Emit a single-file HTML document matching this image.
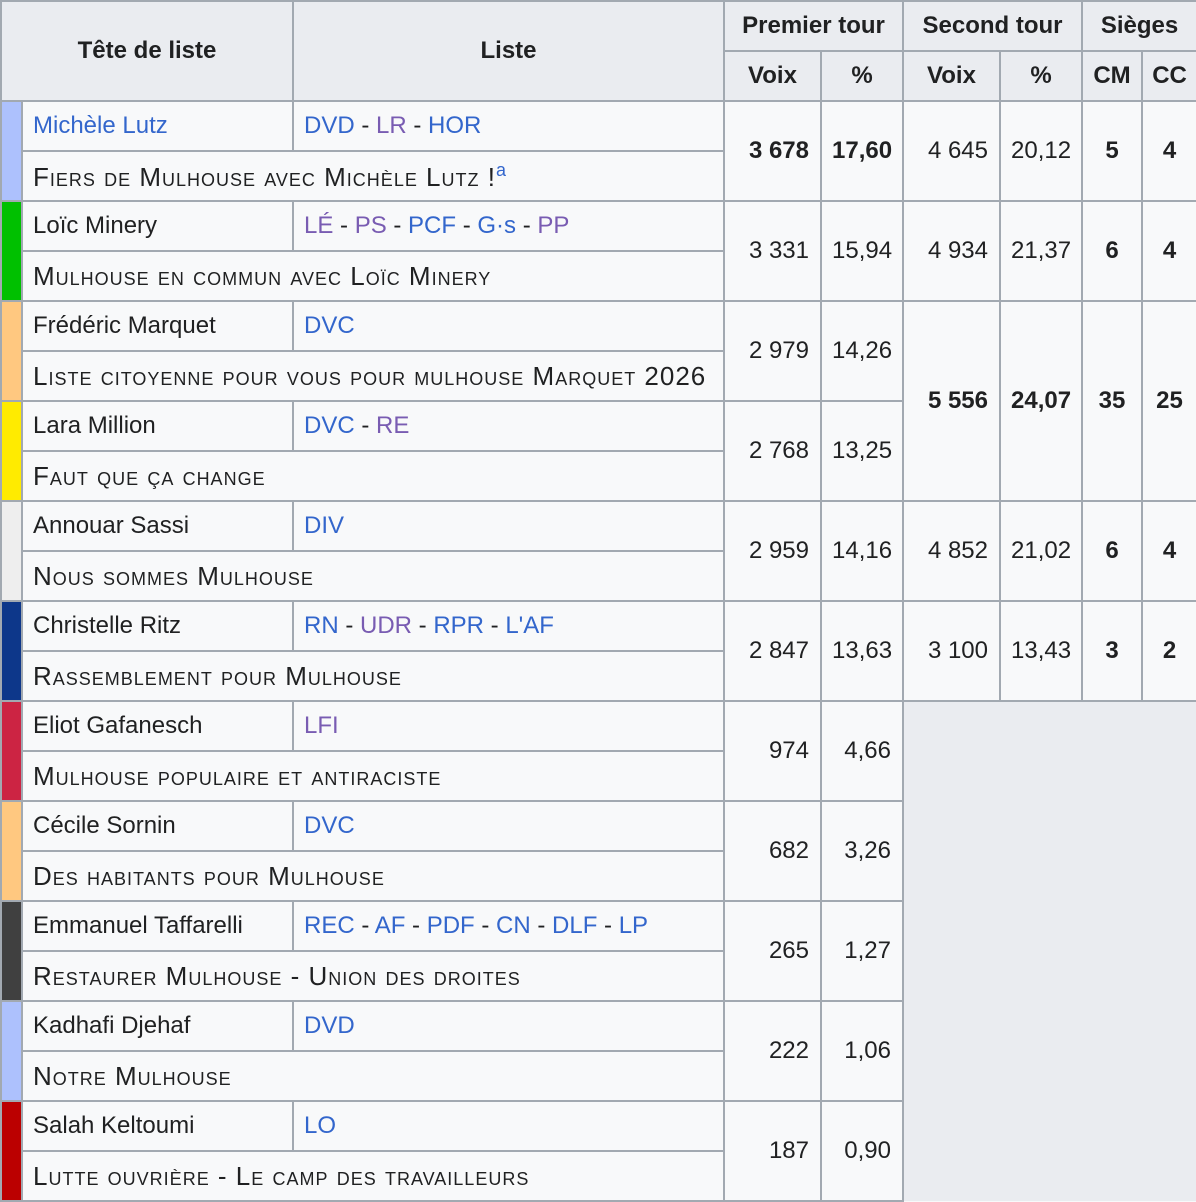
<!DOCTYPE html>
<html><head><meta charset="utf-8">
<style>
html,body{margin:0;padding:0;background:#fff;}
table{border-collapse:collapse;table-layout:fixed;width:1196px;font-family:"Liberation Sans",Arial,sans-serif;font-size:24px;color:#202122;background:#f8f9fa;}
td,th{border:2px solid #a2a9b1;height:46px;padding:0 10px;white-space:nowrap;overflow:hidden;}
th{background:#eaecf0;font-weight:bold;text-align:center;}
tr{height:50px;}
.c{padding:0;border-top:2px solid #a2a9b1;}
.n{text-align:right;padding-right:11px;}
.s{text-align:center;padding:0;}
.b{font-weight:bold;}
.sc{font-variant:small-caps;font-size:26px;letter-spacing:1px;}
a{color:#3366cc;text-decoration:none;}
.v{color:#795cb2;}
.g{background:#eaecf0;border:none;border-left:2px solid #a2a9b1;}
sup{font-size:18px;vertical-align:10px;color:#3366cc;font-variant:normal;letter-spacing:0;}
</style></head><body>
<table>
<colgroup><col style="width:21px"><col style="width:271px"><col style="width:431px"><col style="width:97px"><col style="width:82px"><col style="width:97px"><col style="width:82px"><col style="width:60px"><col style="width:55px"></colgroup>
<tr><th colspan="2" rowspan="2">Tête de liste</th><th rowspan="2">Liste</th><th colspan="2">Premier tour</th><th colspan="2">Second tour</th><th colspan="2">Sièges</th></tr>
<tr><th>Voix</th><th>%</th><th>Voix</th><th>%</th><th class="s">CM</th><th class="s">CC</th></tr>

<tr><td rowspan="2" class="c" style="background:#adc1fd"></td><td><a>Michèle Lutz</a></td><td><a>DVD</a> - <a class="v">LR</a> - <a>HOR</a></td><td rowspan="2" class="n b">3 678</td><td rowspan="2" class="n b">17,60</td><td rowspan="2" class="n">4 645</td><td rowspan="2" class="n">20,12</td><td rowspan="2" class="s b">5</td><td rowspan="2" class="s b">4</td></tr>
<tr><td colspan="2" class="sc">Fiers de Mulhouse avec Michèle Lutz !<sup>a</sup></td></tr>

<tr><td rowspan="2" class="c" style="background:#00c000"></td><td>Loïc Minery</td><td><a class="v">LÉ</a> - <a class="v">PS</a> - <a>PCF</a> - <a>G·s</a> - <a class="v">PP</a></td><td rowspan="2" class="n">3 331</td><td rowspan="2" class="n">15,94</td><td rowspan="2" class="n">4 934</td><td rowspan="2" class="n">21,37</td><td rowspan="2" class="s b">6</td><td rowspan="2" class="s b">4</td></tr>
<tr><td colspan="2" class="sc">Mulhouse en commun avec Loïc Minery</td></tr>

<tr><td rowspan="2" class="c" style="background:#ffc880"></td><td>Frédéric Marquet</td><td><a>DVC</a></td><td rowspan="2" class="n">2 979</td><td rowspan="2" class="n">14,26</td><td rowspan="4" class="n b">5 556</td><td rowspan="4" class="n b">24,07</td><td rowspan="4" class="s b">35</td><td rowspan="4" class="s b">25</td></tr>
<tr><td colspan="2" class="sc">Liste citoyenne pour vous pour mulhouse Marquet 2026</td></tr>

<tr><td rowspan="2" class="c" style="background:#ffeb00"></td><td>Lara Million</td><td><a>DVC</a> - <a class="v">RE</a></td><td rowspan="2" class="n">2 768</td><td rowspan="2" class="n">13,25</td></tr>
<tr><td colspan="2" class="sc">Faut que ça change</td></tr>

<tr><td rowspan="2" class="c" style="background:#eeeeee"></td><td>Annouar Sassi</td><td><a>DIV</a></td><td rowspan="2" class="n">2 959</td><td rowspan="2" class="n">14,16</td><td rowspan="2" class="n">4 852</td><td rowspan="2" class="n">21,02</td><td rowspan="2" class="s b">6</td><td rowspan="2" class="s b">4</td></tr>
<tr><td colspan="2" class="sc">Nous sommes Mulhouse</td></tr>

<tr><td rowspan="2" class="c" style="background:#0d378a"></td><td>Christelle Ritz</td><td><a>RN</a> - <a class="v">UDR</a> - <a>RPR</a> - <a>L'AF</a></td><td rowspan="2" class="n">2 847</td><td rowspan="2" class="n">13,63</td><td rowspan="2" class="n">3 100</td><td rowspan="2" class="n">13,43</td><td rowspan="2" class="s b">3</td><td rowspan="2" class="s b">2</td></tr>
<tr><td colspan="2" class="sc">Rassemblement pour Mulhouse</td></tr>

<tr><td rowspan="2" class="c" style="background:#cc2443"></td><td>Eliot Gafanesch</td><td><a class="v">LFI</a></td><td rowspan="2" class="n">974</td><td rowspan="2" class="n">4,66</td><td rowspan="10" colspan="4" class="g"></td></tr>
<tr><td colspan="2" class="sc">Mulhouse populaire et antiraciste</td></tr>

<tr><td rowspan="2" class="c" style="background:#ffc880"></td><td>Cécile Sornin</td><td><a>DVC</a></td><td rowspan="2" class="n">682</td><td rowspan="2" class="n">3,26</td></tr>
<tr><td colspan="2" class="sc">Des habitants pour Mulhouse</td></tr>

<tr><td rowspan="2" class="c" style="background:#404040"></td><td>Emmanuel Taffarelli</td><td><a>REC</a> - <a>AF</a> - <a>PDF</a> - <a>CN</a> - <a>DLF</a> - <a>LP</a></td><td rowspan="2" class="n">265</td><td rowspan="2" class="n">1,27</td></tr>
<tr><td colspan="2" class="sc">Restaurer Mulhouse - Union des droites</td></tr>

<tr><td rowspan="2" class="c" style="background:#adc1fd"></td><td>Kadhafi Djehaf</td><td><a>DVD</a></td><td rowspan="2" class="n">222</td><td rowspan="2" class="n">1,06</td></tr>
<tr><td colspan="2" class="sc">Notre Mulhouse</td></tr>

<tr><td rowspan="2" class="c" style="background:#bb0000"></td><td>Salah Keltoumi</td><td><a>LO</a></td><td rowspan="2" class="n">187</td><td rowspan="2" class="n">0,90</td></tr>
<tr><td colspan="2" class="sc">Lutte ouvrière - Le camp des travailleurs</td></tr>
</table>
</body></html>
